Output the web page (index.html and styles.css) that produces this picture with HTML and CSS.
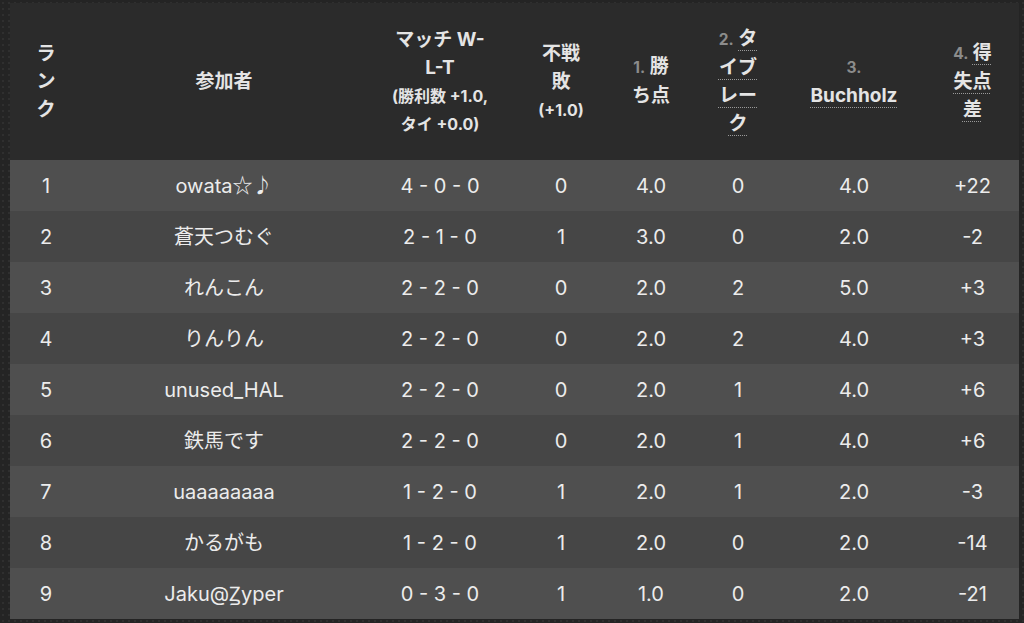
FILE: index.html
```html
<!DOCTYPE html>
<html lang="ja">
<head>
<meta charset="utf-8">
<title>順位表</title>
<link rel="stylesheet" href="styles.css">
</head>
<body>
<table class="standings">
  <colgroup>
    <col class="c-rank">
    <col class="c-name">
    <col class="c-wlt">
    <col class="c-bye">
    <col class="c-pts">
    <col class="c-tb">
    <col class="c-buch">
    <col class="c-diff">
  </colgroup>
  <thead>
    <tr>
      <th>ランク</th>
      <th>参加者</th>
      <th>マッチ W-L-T <span class="sub">(勝利数 +1.0, タイ +0.0)</span></th>
      <th>不戦敗 <span class="sub">(+1.0)</span></th>
      <th><span class="ord">1.</span> 勝ち点</th>
      <th><span class="ord">2.</span> <abbr class="tip">タイブレーク</abbr></th>
      <th><span class="ord">3.</span> <abbr class="tip">Buchholz</abbr></th>
      <th><span class="ord">4.</span> <abbr class="tip">得失点差</abbr></th>
    </tr>
  </thead>
  <tbody>
    <tr><td>1</td><td>owata<span class="sym">☆♪</span></td><td>4 - 0 - 0</td><td>0</td><td>4.0</td><td>0</td><td>4.0</td><td>+22</td></tr>
    <tr><td>2</td><td>蒼天つむぐ</td><td>2 - 1 - 0</td><td>1</td><td>3.0</td><td>0</td><td>2.0</td><td>-2</td></tr>
    <tr><td>3</td><td>れんこん</td><td>2 - 2 - 0</td><td>0</td><td>2.0</td><td>2</td><td>5.0</td><td>+3</td></tr>
    <tr><td>4</td><td>りんりん</td><td>2 - 2 - 0</td><td>0</td><td>2.0</td><td>2</td><td>4.0</td><td>+3</td></tr>
    <tr><td>5</td><td>unused_HAL</td><td>2 - 2 - 0</td><td>0</td><td>2.0</td><td>1</td><td>4.0</td><td>+6</td></tr>
    <tr><td>6</td><td>鉄馬です</td><td>2 - 2 - 0</td><td>0</td><td>2.0</td><td>1</td><td>4.0</td><td>+6</td></tr>
    <tr><td>7</td><td>uaaaaaaaa</td><td>1 - 2 - 0</td><td>1</td><td>2.0</td><td>1</td><td>2.0</td><td>-3</td></tr>
    <tr><td>8</td><td>かるがも</td><td>1 - 2 - 0</td><td>1</td><td>2.0</td><td>0</td><td>2.0</td><td>-14</td></tr>
    <tr><td>9</td><td>Jaku@Ꙁyper</td><td>0 - 3 - 0</td><td>1</td><td>1.0</td><td>0</td><td>2.0</td><td>-21</td></tr>
  </tbody>
</table>
</body>
</html>
```
FILE: styles.css
```css
html, body {
  margin: 0;
  height: 100%;
}
body {
  background-color: #242424;
  background-image: radial-gradient(circle, #2f2f2f 0.8px, transparent 1.2px);
  background-size: 6px 6px;
  padding: 3px 4px 0 10px;
  box-sizing: border-box;
  font-family: Inter, "Noto Sans CJK JP", "DejaVu Sans", sans-serif;
  color: #ececec;
  overflow: hidden;
}
.standings {
  width: 1009px;
  table-layout: fixed;
  border-collapse: collapse;
  border-spacing: 0;
}
.c-rank { width: 72px; }
.c-name { width: 284px; }
.c-wlt { width: 148px; }
.c-bye { width: 94px; }
.c-pts { width: 86px; }
.c-tb { width: 88px; }
.c-buch { width: 144px; }
.c-diff { width: 93px; }

.standings thead tr {
  background: #2b2b2b;
  height: 157px;
}
.standings th {
  padding: 0 24px;
  font-size: 19px;
  line-height: 28px;
  font-weight: 700;
  color: #e4e4e4;
  text-align: center;
  vertical-align: middle;
}
.sub {
  display: block;
  font-size: 16px;
}
.ord {
  font-size: 15.5px;
  color: #8c8c8c;
}
.tip {
  text-decoration: underline dotted #9a9a9a;
  text-decoration-thickness: 1px;
  text-underline-offset: 5px;
}
.standings tbody tr {
  height: 51px;
}
.standings td {
  padding: 0 20px;
  font-size: 20px;
  line-height: 26px;
  text-align: center;
  vertical-align: middle;
  white-space: nowrap;
}
.sym {
  font-family: "Noto Sans CJK JP", "DejaVu Sans", sans-serif;
}
.standings tbody tr:nth-child(odd) {
  background: #4f4f4f;
}
.standings tbody tr:nth-child(even) {
  background: #464646;
}
```
